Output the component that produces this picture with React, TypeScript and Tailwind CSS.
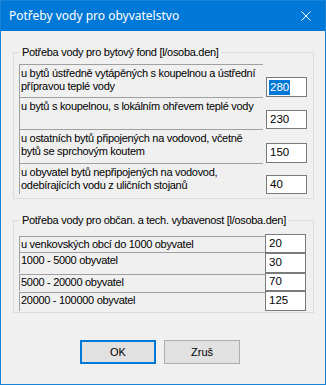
import React from 'react'

interface Row {
  text: string
  value: string
  rowH: number
  labelH: number
  inputH: number
  selected?: boolean
}

const bytove: Row[] = [
  { text: 'u bytů ústředně vytápěných s koupelnou a ústřední přípravou teplé vody', value: '280', rowH: 34, labelH: 33, inputH: 20, selected: true },
  { text: 'u bytů s koupelnou, s lokálním ohřevem teplé vody', value: '230', rowH: 32, labelH: 32, inputH: 19 },
  { text: 'u ostatních bytů připojených na vodovod, včetně bytů se sprchovým koutem', value: '150', rowH: 34, labelH: 34, inputH: 20 },
  { text: 'u obyvatel bytů nepřipojených na vodovod, odebírajících vodu z uličních stojanů', value: '40', rowH: 31, labelH: 31, inputH: 19 },
]

const obcanske: Row[] = [
  { text: 'u venkovských obcí do 1000 obyvatel', value: '20', rowH: 19, labelH: 17, inputH: 19 },
  { text: '1000 - 5000 obyvatel', value: '30', rowH: 20, labelH: 21, inputH: 20 },
  { text: '5000 - 20000 obyvatel', value: '70', rowH: 18, labelH: 17, inputH: 18 },
  { text: '20000 - 100000 obyvatel', value: '125', rowH: 20, labelH: 19, inputH: 20 },
]

function ValueBox({ row }: { row: Row }) {
  return (
    <div
      className="w-[41px] shrink-0 border border-[#7a7a7a] bg-white flex items-center pl-[2px] text-[11.5px] tracking-normal"
      style={{ height: row.inputH }}
    >
      {row.selected ? (
        <span className="bg-[#0078d7] text-white leading-[15px] px-[1px]">{row.value}</span>
      ) : (
        <span className="px-[1px]">{row.value}</span>
      )}
    </div>
  )
}

function GroupBox({ title, children, className }: { title: string; children: React.ReactNode; className?: string }) {
  return (
    <fieldset className={'w-[301px] border border-[#dcdcdc] pl-[5px] pr-[5px] ' + (className ?? '')}>
      <legend className="ml-[1px] px-[2px] leading-[14px]">{title}</legend>
      {children}
    </fieldset>
  )
}

export default function App() {
  return (
    <div className="w-[326px] h-[385px] border border-[#1883d7] bg-[#f0f0f0] flex flex-col font-['Liberation_Sans',Arial,sans-serif] text-[11px] tracking-[-0.3px] text-black overflow-hidden">
      {/* titulek */}
      <div className="h-[30px] shrink-0 bg-[#0078d7] flex items-center justify-between pl-[8px] pr-[10px] text-white tracking-normal">
        <span className="font-['Noto_Sans',sans-serif] text-[12px]">Potřeby vody pro obyvatelstvo</span>
        <svg width="10" height="10" viewBox="0 0 10 10" className="mr-[4px]">
          <path d="M0.5 0.5 L9.5 9.5 M9.5 0.5 L0.5 9.5" stroke="white" strokeWidth="1" />
        </svg>
      </div>

      <div className="pl-[12px] flex flex-col">
        {/* bytovy fond */}
        <GroupBox title="Potřeba vody pro bytový fond [l/osoba.den]" className="mt-[14px] pt-[4px] pb-[4px]">
          {bytove.map((row) => (
            <div key={row.value} className="flex items-end gap-[3px]" style={{ height: row.rowH }}>
              <div
                className="w-[244px] shrink-0 border-t border-l border-[#a0a0a0] pl-[1px] pt-[2px] leading-[13px]"
                style={{ height: row.labelH }}
              >
                {row.text}
              </div>
              <ValueBox row={row} />
            </div>
          ))}
        </GroupBox>

        {/* obcanska vybavenost */}
        <GroupBox title="Potřeba vody pro občan. a tech. vybavenost [l/osoba.den]" className="mt-[14px] pt-[7px] pb-[1px]">
          {obcanske.map((row) => (
            <div key={row.value} className="flex items-end" style={{ height: row.rowH }}>
              <div
                className="w-[246px] shrink-0 border-t border-l border-[#a0a0a0] pl-[1px] pt-[1px] leading-[13px]"
                style={{ height: row.labelH }}
              >
                {row.text}
              </div>
              <ValueBox row={row} />
            </div>
          ))}
        </GroupBox>

        {/* tlacitka */}
        <div className="mt-[27px] flex gap-[8px] pl-[67px] text-[11px] tracking-normal">
          <button className="w-[76px] h-[24px] border-2 border-[#0078d7] bg-[#e1e1e1] flex items-center justify-center">
            OK
          </button>
          <button className="w-[76px] h-[24px] border border-[#adadad] bg-[#e1e1e1] flex items-center justify-center">
            Zruš
          </button>
        </div>
      </div>
    </div>
  )
}
